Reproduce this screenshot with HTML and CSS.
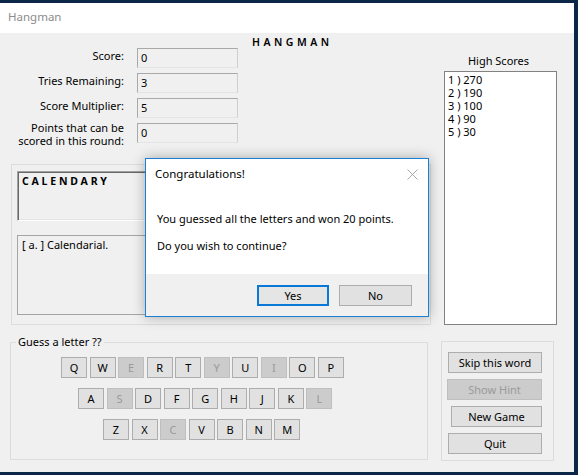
FILE: index.html
```html
<!DOCTYPE html>
<html lang="en">
<head>
<meta charset="utf-8">
<title>Hangman</title>
<link rel="stylesheet" href="styles.css">
</head>
<body>
<div class="desktop">
  <div class="window">
    <div class="titlebar">Hangman</div>
    <div class="client">
      <div class="left">
        <div class="top">
          <div class="stats">
            <div class="label">Score:</div><div class="field">0</div>
            <div class="label">Tries Remaining:</div><div class="field">3</div>
            <div class="label">Score Multiplier:</div><div class="field">5</div>
            <div class="label two">Points that can be<br>scored in this round:</div><div class="field">0</div>
          </div>
          <div class="heading">HANGMAN</div>
        </div>
        <div class="word-group">
          <div class="word-box">CALENDARY</div>
          <div class="def-box">[ a. ] Calendarial.</div>
        </div>
        <fieldset class="guess-group">
          <legend>Guess a letter ??</legend>
          <div class="keys">
            <div class="key-row r1">
              <button class="key">Q</button><button class="key">W</button><button class="key off">E</button><button class="key">R</button><button class="key">T</button><button class="key off">Y</button><button class="key">U</button><button class="key off">I</button><button class="key">O</button><button class="key">P</button>
            </div>
            <div class="key-row r2">
              <button class="key">A</button><button class="key off">S</button><button class="key">D</button><button class="key">F</button><button class="key">G</button><button class="key">H</button><button class="key">J</button><button class="key">K</button><button class="key off">L</button>
            </div>
            <div class="key-row r3">
              <button class="key">Z</button><button class="key">X</button><button class="key off">C</button><button class="key">V</button><button class="key">B</button><button class="key">N</button><button class="key">M</button>
            </div>
          </div>
        </fieldset>
      </div>
      <div class="right">
        <div class="hs-label">High Scores</div>
        <div class="hs-list">
          <div>1 ) 270</div>
          <div>2 ) 190</div>
          <div>3 ) 100</div>
          <div>4 ) 90</div>
          <div>5 ) 30</div>
        </div>
        <div class="btn-group">
          <button class="btn">Skip this word</button>
          <button class="btn off hint">Show Hint</button>
          <button class="btn newgame">New Game</button>
          <button class="btn">Quit</button>
        </div>
      </div>

      <div class="dialog">
        <div class="dlg-title">
          <span>Congratulations!</span>
          <svg class="dlg-close" width="11" height="11" viewBox="0 0 11 11"><path d="M0.5 0.5 L10.5 10.5 M10.5 0.5 L0.5 10.5" stroke="#a8a8a8" stroke-width="1" fill="none"/></svg>
        </div>
        <div class="dlg-msg">
          <p>You guessed all the letters and won 20 points.</p>
          <p>Do you wish to continue?</p>
        </div>
        <div class="dlg-foot">
          <button class="dbtn yes">Yes</button>
          <button class="dbtn">No</button>
        </div>
      </div>
    </div>
  </div>
</div>
</body>
</html>
```
FILE: styles.css
```css
* { box-sizing: border-box; }

body {
  margin: 0;
  background: #0c2647;
  font-family: "Noto Sans", "Open Sans", sans-serif;
  font-size: 11px;
  color: #000;
}

.desktop {
  height: 475px;
  padding-top: 3px;
}

.window {
  width: 574px;
  height: 469px;
  background: #f0f0f0;
  display: flex;
  flex-direction: column;
}

.titlebar {
  height: 30px;
  background: #fff;
  color: #8c8c8c;
  padding: 6px 0 0 8px;
  line-height: 16px;
  font-size: 11.5px;
}

.client {
  flex: 1;
  display: flex;
  position: relative;
}

.left { width: 435px; }

.top { display: flex; }

.stats {
  display: grid;
  grid-template-columns: 124px 101px;
  column-gap: 13px;
  row-gap: 5px;
  padding-top: 15px;
}

.label {
  text-align: right;
  line-height: 16px;
  white-space: nowrap;
}

.label.two {
  line-height: 13px;
  margin-top: -2px;
}

.field {
  height: 20px;
  border: 1px solid;
  border-color: #a9a9a9 #cfcfcf #e4e4e4 #a9a9a9;
  padding-left: 3px;
  line-height: 18px;
}

.heading {
  margin-left: 14px;
  padding-top: 2px;
  font-size: 10.5px;
  font-weight: 600;
  letter-spacing: 3.5px;
  line-height: 14px;
}

.word-group {
  margin: 17px 0 0 11px;
  width: 420px;
  height: 161px;
  border: 1px solid #dcdcdc;
  padding: 6px 5px 0 5px;
}

.word-box {
  height: 50px;
  border: 1px solid;
  border-color: #a0a0a0 #fff #fff #a0a0a0;
  box-shadow: inset 1px 1px 0 #696969, inset -1px -1px 0 #e3e3e3;
  padding: 2px 0 0 4px;
  font-size: 10.5px;
  font-weight: 700;
  letter-spacing: 2.8px;
  line-height: 14px;
}

.def-box {
  margin-top: 14px;
  height: 80px;
  border: 1px solid #a5a5a5;
  padding: 1px 0 0 4px;
  line-height: 16px;
}

.guess-group {
  margin: 10px 0 0 10px;
  width: 418px;
  height: 125px;
  padding: 0;
  border: 1px solid #dcdcdc;
}

.guess-group legend {
  margin-left: 5px;
  padding: 0 2px;
  line-height: 14px;
}

.keys {
  margin-top: 8px;
  display: flex;
  flex-direction: column;
  gap: 10px;
}

.key-row {
  display: flex;
  gap: 2.56px;
}

.r1 { padding-left: 50px; }
.r2 { padding-left: 67px; }
.r3 { padding-left: 92px; }

button {
  font-family: inherit;
  font-size: 11px;
  color: #000;
  margin: 0;
  padding: 0;
  cursor: default;
}

.key {
  width: 26px;
  height: 21px;
  background: #e1e1e1;
  border: 1px solid #adadad;
  line-height: 19px;
}

.key.off, .btn.off {
  background: #cccccc;
  border-color: #bfbfbf;
  color: #9a9a9a;
}

.right {
  padding: 20px 0 0 9px;
}

.hs-label {
  width: 113px;
  text-align: center;
  line-height: 16px;
  padding-right: 4px;
}

.hs-list {
  margin-top: 2px;
  width: 113px;
  height: 254px;
  background: #fff;
  border: 1px solid #828282;
  padding: 1px 0 0 3px;
  line-height: 13px;
}

.btn-group {
  margin: 16px 0 0 -3px;
  width: 113px;
  height: 120px;
  border: 1px solid #dcdcdc;
  padding: 10px 0 0 6px;
  display: flex;
  flex-direction: column;
  align-items: flex-start;
  gap: 6px;
}

.btn {
  width: 94px;
  height: 21px;
  background: #e1e1e1;
  border: 1px solid #adadad;
  line-height: 19px;
}

.btn.hint { margin-left: -1px; width: 95px; }
.btn.newgame { margin-left: 3px; width: 91px; }

.dialog {
  position: absolute;
  left: 145px;
  top: 125px;
  width: 284px;
  height: 159px;
  background: #fff;
  border: 1px solid #1b7fd3;
  box-shadow: 0 0 12px rgba(0, 0, 0, 0.3);
  display: flex;
  flex-direction: column;
}

.dlg-title {
  display: flex;
  justify-content: space-between;
  align-items: center;
  padding: 7px 10px 0 9px;
  line-height: 16px;
  font-size: 11.5px;
}

.dlg-close { margin-top: 1px; }

.dlg-msg {
  padding: 29px 0 0 11px;
}

.dlg-msg p {
  margin: 0 0 11px;
  line-height: 16px;
}

.dlg-foot {
  margin-top: auto;
  height: 42px;
  background: #f0f0f0;
  display: flex;
  justify-content: flex-end;
  gap: 10px;
  padding: 11px 16px 0 0;
}

.dbtn {
  width: 73px;
  height: 21px;
  background: #e1e1e1;
  border: 1px solid #adadad;
  line-height: 19px;
}

.dbtn.yes {
  width: 72px;
  border: 2px solid #0a78d7;
  background: #e5e5e5;
  line-height: 17px;
}
```
